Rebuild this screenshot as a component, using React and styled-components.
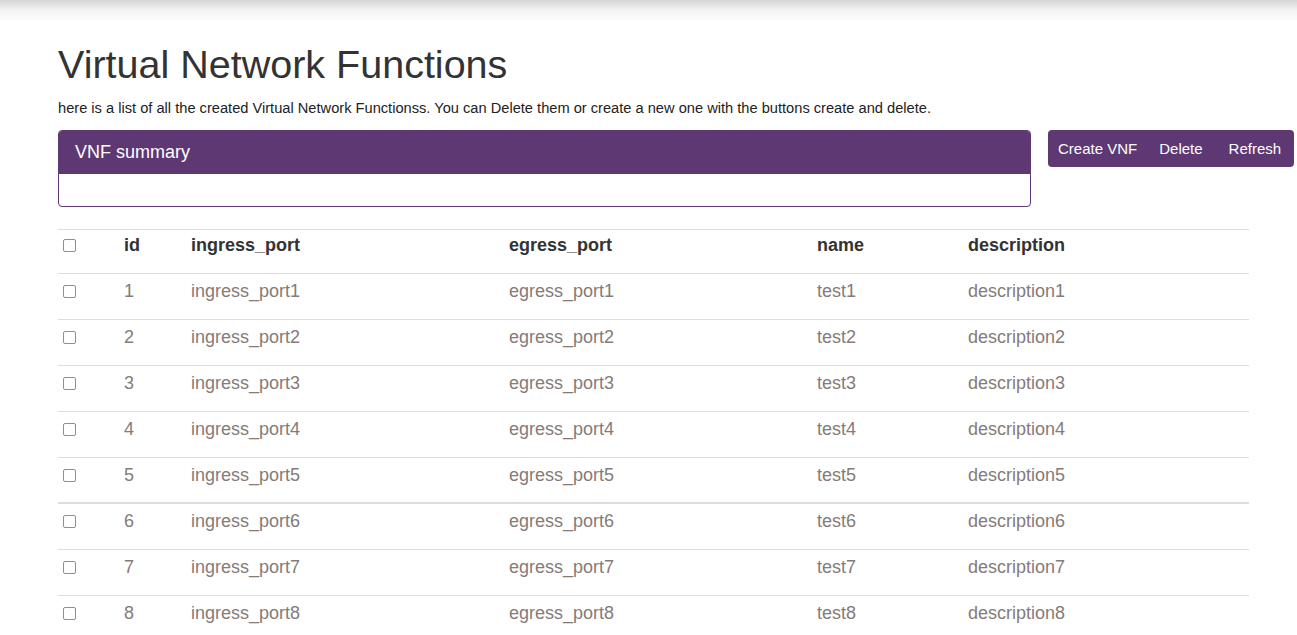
import React from 'react';
import styled, { createGlobalStyle } from 'styled-components';

const GlobalStyle = createGlobalStyle`
  html, body {
    margin: 0;
    padding: 0;
    background: #fff;
    font-family: "Liberation Sans", Arial, Helvetica, sans-serif;
    color: #333;
  }
`;

const PURPLE = '#5e3873';

const TopShadow = styled.div`
  height: 22px;
  background: linear-gradient(#d6d6d6, #f2f2f2 45%, #fff);
`;

const Container = styled.div`
  padding: 0 3px 0 58px;
`;

const Title = styled.h1`
  margin: 19px 0 0 0;
  font-size: 39.5px;
  font-weight: 400;
  line-height: 46px;
  color: #333;
`;

const Lead = styled.p`
  margin: 11px 0 0 0;
  font-size: 14.65px;
  line-height: 20px;
  color: #222;
  white-space: nowrap;
`;

const TopRow = styled.div`
  display: flex;
  align-items: flex-start;
  gap: 17px;
  margin-top: 12px;
`;

const Panel = styled.div`
  flex: 0 0 973px;
  border: 1px solid ${PURPLE};
  border-radius: 4px;
  overflow: hidden;
  box-sizing: border-box;
`;

const PanelHeading = styled.div`
  background: ${PURPLE};
  color: #fff;
  height: 43px;
  display: flex;
  align-items: center;
  padding: 0 16px;
  font-size: 18px;
`;

const PanelBody = styled.div`
  height: 32px;
`;

const ButtonGroup = styled.div`
  flex: 0 0 auto;
  display: flex;
  background: ${PURPLE};
  border-radius: 4px;
  height: 37px;
  align-items: center;
  padding: 0 13px 0 10px;
`;

const Button = styled.button`
  background: transparent;
  border: none;
  color: #fff;
  font-family: inherit;
  font-size: 15px;
  white-space: nowrap;
  padding: 0;
  margin-right: ${p => p.$gap}px;
  cursor: pointer;
`;

const Table = styled.table`
  margin-top: 22px;
  width: 1191px;
  border-collapse: collapse;
  font-size: 18px;
  line-height: 26px;
`;

const Th = styled.th`
  text-align: left;
  font-weight: 700;
  color: #333;
  padding: 2px 8px 15px;
  border-top: 1px solid #ddd;
  border-bottom: 1px solid #ddd;
  width: ${p => p.$w || 'auto'};
  vertical-align: top;
`;

const Td = styled.td`
  color: #857b78;
  padding: 4px 8px ${p => (p.$thick ? 14 : 15)}px;
  border-bottom: ${p => (p.$thick ? '2px' : '1px')} solid #ddd;
  vertical-align: top;
`;

const CheckHead = styled.th`
  padding: 0 0 0 5px;
  width: 53px;
  text-align: left;
  border-top: 1px solid #ddd;
  border-bottom: 1px solid #ddd;
  vertical-align: top;
`;

const CheckCell = styled.td`
  padding: 0 0 0 5px;
  border-bottom: ${p => (p.$thick ? '2px' : '1px')} solid #ddd;
  vertical-align: top;
`;

const Box = styled.span`
  display: block;
  width: 11px;
  height: 11px;
  margin-top: ${p => p.$top}px;
  border: 1px solid #8f8f8f;
  border-radius: 2px;
  background: #fff;
`;

const rows = [1, 2, 3, 4, 5, 6, 7, 8];

export default function App() {
  return (
    <>
      <GlobalStyle />
      <TopShadow />
      <Container>
        <Title>Virtual Network Functions</Title>
        <Lead>
          here is a list of all the created Virtual Network Functionss. You can Delete them or create a new one with the
          buttons create and delete.
        </Lead>
        <TopRow>
          <Panel>
            <PanelHeading>VNF summary</PanelHeading>
            <PanelBody />
          </Panel>
          <ButtonGroup>
            <Button $gap={22}>Create VNF</Button>
            <Button $gap={26}>Delete</Button>
            <Button $gap={0}>Refresh</Button>
          </ButtonGroup>
        </TopRow>
        <Table>
          <thead>
            <tr>
              <CheckHead>
                <Box $top={9} />
              </CheckHead>
              <Th $w="51px">id</Th>
              <Th $w="302px">ingress_port</Th>
              <Th $w="292px">egress_port</Th>
              <Th $w="135px">name</Th>
              <Th>description</Th>
            </tr>
          </thead>
          <tbody>
            {rows.map(n => (
              <tr key={n}>
                <CheckCell $thick={n === 5}>
                  <Box $top={11} />
                </CheckCell>
                <Td $thick={n === 5}>{n}</Td>
                <Td $thick={n === 5}>ingress_port{n}</Td>
                <Td $thick={n === 5}>egress_port{n}</Td>
                <Td $thick={n === 5}>test{n}</Td>
                <Td $thick={n === 5}>description{n}</Td>
              </tr>
            ))}
          </tbody>
        </Table>
      </Container>
    </>
  );
}
